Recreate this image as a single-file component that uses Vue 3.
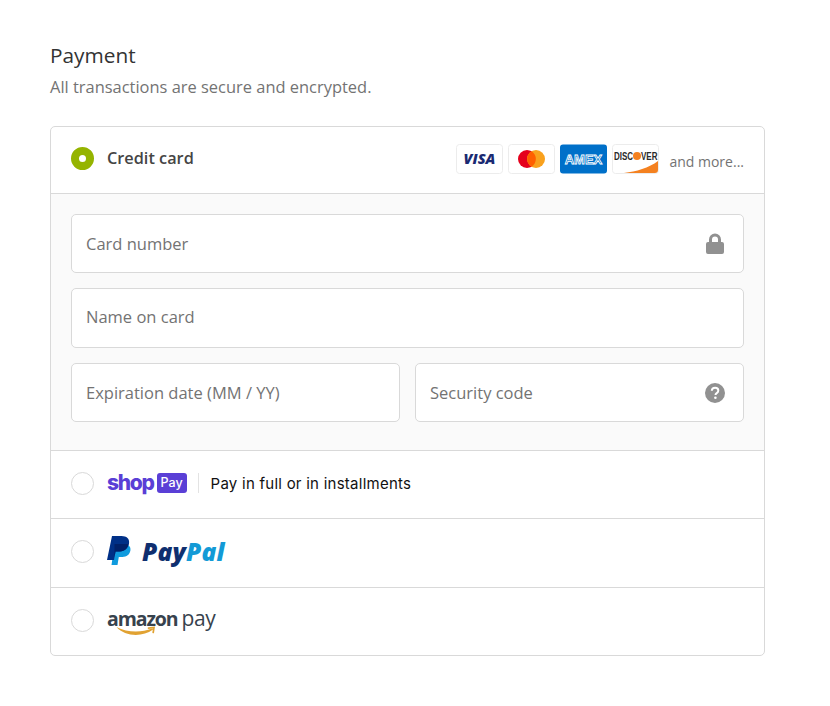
<script setup>
</script>

<template>
  <main class="page">
    <h1 class="title">Payment</h1>
    <p class="subtitle">All transactions are secure and encrypted.</p>

    <section class="card">
      <div class="row row-head">
        <span class="radio radio-on"></span>
        <span class="method">Credit card</span>
        <div class="brands">
          <svg class="brand" width="47" height="30" viewBox="0 0 47 30">
            <rect x=".5" y=".5" width="46" height="29" rx="3" fill="#fff" stroke="#ececec" />
            <text x="23.5" y="20" text-anchor="middle" class="visa">VISA</text>
          </svg>
          <svg class="brand" width="47" height="30" viewBox="0 0 47 30">
            <rect x=".5" y=".5" width="46" height="29" rx="3" fill="#fff" stroke="#ececec" />
            <circle cx="19" cy="15" r="9" fill="#e5001c" />
            <circle cx="28" cy="15" r="9" fill="#f9a11d" />
            <path d="M23.500 7.300a9 9 0 0 1 0 15.400a9 9 0 0 1 0-15.400z" fill="#ff5f00" />
          </svg>
          <svg class="brand" width="47" height="30" viewBox="0 0 47 30">
            <rect width="47" height="29" y=".5" rx="3" fill="#0070c9" />
            <text x="23.500" y="19.500" text-anchor="middle" class="amex">AMEX</text>
          </svg>
          <svg class="brand" width="47" height="30" viewBox="0 0 47 30">
            <rect x=".5" y=".5" width="46" height="29" rx="3" fill="#fff" stroke="#ececec" />
            <path d="M12 29C24 27.500 37 24 46 17V26a3 3 0 0 1-3 3z" fill="#f48120" />
            <text transform="translate(2 16) scale(1 1.35)" class="discover">DISC</text>
            <circle cx="25" cy="12" r="4" fill="#f48120" />
            <text transform="translate(29 16) scale(1 1.35)" class="discover">VER</text>
          </svg>
          <span class="more">and more...</span>
        </div>
      </div>

      <div class="form">
        <div class="field">
          <span>Card number</span>
          <svg class="lock" width="18" height="21" viewBox="0 0 18 21" fill="#919191">
            <path d="M3 9V6.500a6 6 0 0 1 12 0V9h1a2 2 0 0 1 2 2v8a2 2 0 0 1-2 2H2a2 2 0 0 1-2-2v-8a2 2 0 0 1 2-2zm3 0h6V6.500a3 3 0 0 0-6 0z" />
          </svg>
        </div>
        <div class="field field-tall"><span>Name on card</span></div>
        <div class="split">
          <div class="field"><span>Expiration date (MM / YY)</span></div>
          <div class="field">
            <span>Security code</span>
            <svg width="20" height="20" viewBox="0 0 20 20">
              <circle cx="10" cy="10" r="10" fill="#919191" />
              <path d="M6.800 7.700C6.900 5.800 8.200 4.800 10.100 4.800c1.900 0 3.200 1.100 3.200 2.700 0 1.300-.7 2-1.600 2.600-.9.600-1.200 1-1.200 1.900" fill="none" stroke="#fff" stroke-width="2" />
              <circle cx="10.400" cy="14.800" r="1.300" fill="#fff" />
            </svg>
          </div>
        </div>
      </div>

      <div class="row row-shop">
        <span class="radio"></span>
        <span class="shop-word">shop</span>
        <span class="shop-badge">Pay</span>
        <span class="shop-rule"></span>
        <span class="shop-text">Pay in full or in installments</span>
      </div>

      <div class="row row-paypal">
        <span class="radio"></span>
        <svg class="pp-mark" width="25" height="29" viewBox="0 0 25 29">
          <path d="M7.500 8H17c4 0 7.200 2.400 6.400 6.600-.8 4.300-3.800 6.400-8 6.400h-3.600l-1.300 8H4.500z" fill="#0f9bde" />
          <path d="M5 0h9.500c5 0 8.500 2.700 7.500 7.800-1 5-4.800 7.700-9.800 7.700H8.500L7 24H0z" fill="#003087" />
          <path d="M7.500 8h13.800c-.9 5-4.300 7.500-9.100 7.500H8.500l-1 6z" fill="#012169" />
        </svg>
        <span class="pp-word"><span class="pp-pay">Pay</span><span class="pp-pal">Pal</span></span>
      </div>

      <div class="row row-amazon">
        <span class="radio"></span>
        <div class="amazon">
          <span class="amz-word">amazon</span>
          <span class="amz-pay">pay</span>
          <svg class="amz-smile" width="40" height="10" viewBox="0 0 40 10">
            <path d="M.5 1C11 6.500 25 7 36 2.500c1-.4 1.600.6.700 1.300C27 11 9 11 .5 1z" fill="#e1a232" />
            <path d="M32.500 2.200l5.500-.7-.8 5" fill="none" stroke="#e1a232" stroke-width="1.700" stroke-linecap="round" />
          </svg>
        </div>
      </div>
    </section>
  </main>
</template>

<style scoped>
.page {
  width: 830px;
  height: 706px;
  box-sizing: border-box;
  padding: 40px 65px 0 50px;
  background: #fff;
  font-family: "Open Sans", "Noto Sans", sans-serif;
  overflow: hidden;
}
.title {
  margin: 0;
  font-size: 20.800px;
  line-height: 30px;
  font-weight: 400;
  color: #333;
}
.subtitle {
  margin: 5px 0 0;
  font-size: 16.450px;
  line-height: 24px;
  color: #737373;
}
.card {
  margin-top: 27px;
  border: 1px solid #d9d9d9;
  border-radius: 5px;
  overflow: hidden;
}
.row {
  display: flex;
  align-items: center;
  padding: 0 20px 3px;
  box-sizing: border-box;
}
.row-head { height: 66px; }
.row-shop { height: 68px; border-top: 1px solid #d9d9d9; }
.row-paypal { height: 69px; border-top: 1px solid #d9d9d9; }
.row-amazon { height: 68px; border-top: 1px solid #d9d9d9; }
.radio {
  width: 23px;
  height: 23px;
  box-sizing: border-box;
  border: 1px solid #d9d9d9;
  border-radius: 50%;
  background: #fff;
  flex: none;
  margin-right: 13px;
}
.radio-on {
  border: 8px solid #95b400;
}
.method {
  font-size: 16.300px;
  font-weight: 600;
  color: #454545;
  margin-top: -2px;
}
.brands {
  margin-left: auto;
  display: flex;
  align-items: center;
  gap: 5px;
}
.brand { display: block; }
.visa {
  font: italic 800 14.500px "Open Sans", sans-serif;
  fill: #1a2a72;
}
.amex {
  font: 700 13px "Liberation Sans", sans-serif;
  fill: #0070c9;
  stroke: #fff;
  stroke-width: .8px;
}
.discover {
  font: 700 8px "Liberation Sans", sans-serif;
  fill: #2a2a2a;
}
.more {
  margin: 5px 0 0 5px;
  font-size: 14px;
  color: #737373;
}
.form {
  border-top: 1px solid #d9d9d9;
  background: #fafafa;
  padding: 20px 20px 28px;
  display: flex;
  flex-direction: column;
  gap: 15px;
}
.field {
  height: 59px;
  box-sizing: border-box;
  border: 1px solid #d9d9d9;
  border-radius: 5px;
  background: #fff;
  padding: 0 18px 0 14px;
  display: flex;
  align-items: center;
  justify-content: space-between;
  font-size: 16.500px;
  color: #737373;
}
.field-tall {
  height: 60px;
  padding-bottom: 3px;
}
.lock { margin-right: 1px; }
.split {
  display: grid;
  grid-template-columns: 1fr 1fr;
  gap: 15px;
}
.shop-word {
  font: 800 21px/1 "Inter", sans-serif;
  letter-spacing: -1.300px;
  color: #5a3fd6;
  margin-top: -2px;
}
.shop-badge {
  margin-left: 3px;
  width: 30px;
  height: 20px;
  border-radius: 3px;
  background: #5a3fd6;
  color: #fff;
  font: 500 12.500px/20px "Inter", sans-serif;
  text-align: center;
}
.shop-rule {
  width: 1px;
  height: 20px;
  margin: 0 12px 0 11px;
  background: #e3e3e3;
}
.shop-text {
  font: 400 15px "Inter", sans-serif;
  letter-spacing: .25px;
  color: #111;
}
.pp-mark { flex: none; margin-top: -2px; }
.pp-word {
  margin: 2px 0 0 10px;
  font: italic 800 24.500px/1 "Open Sans", sans-serif;
  letter-spacing: .2px;
}
.pp-pay { color: #0f2f6f; }
.pp-pal { color: #139ad6; }
.amazon {
  position: relative;
  display: flex;
  align-items: baseline;
  gap: 4px;
  margin-top: -3px;
  color: #37424d;
}
.amz-word {
  font: 700 19.500px/1 "Open Sans", sans-serif;
  letter-spacing: -1.100px;
}
.amz-pay {
  font: 400 21px/1 "Open Sans", sans-serif;
  letter-spacing: -.4px;
}
.amz-smile {
  position: absolute;
  left: 9px;
  top: 18px;
}
</style>
